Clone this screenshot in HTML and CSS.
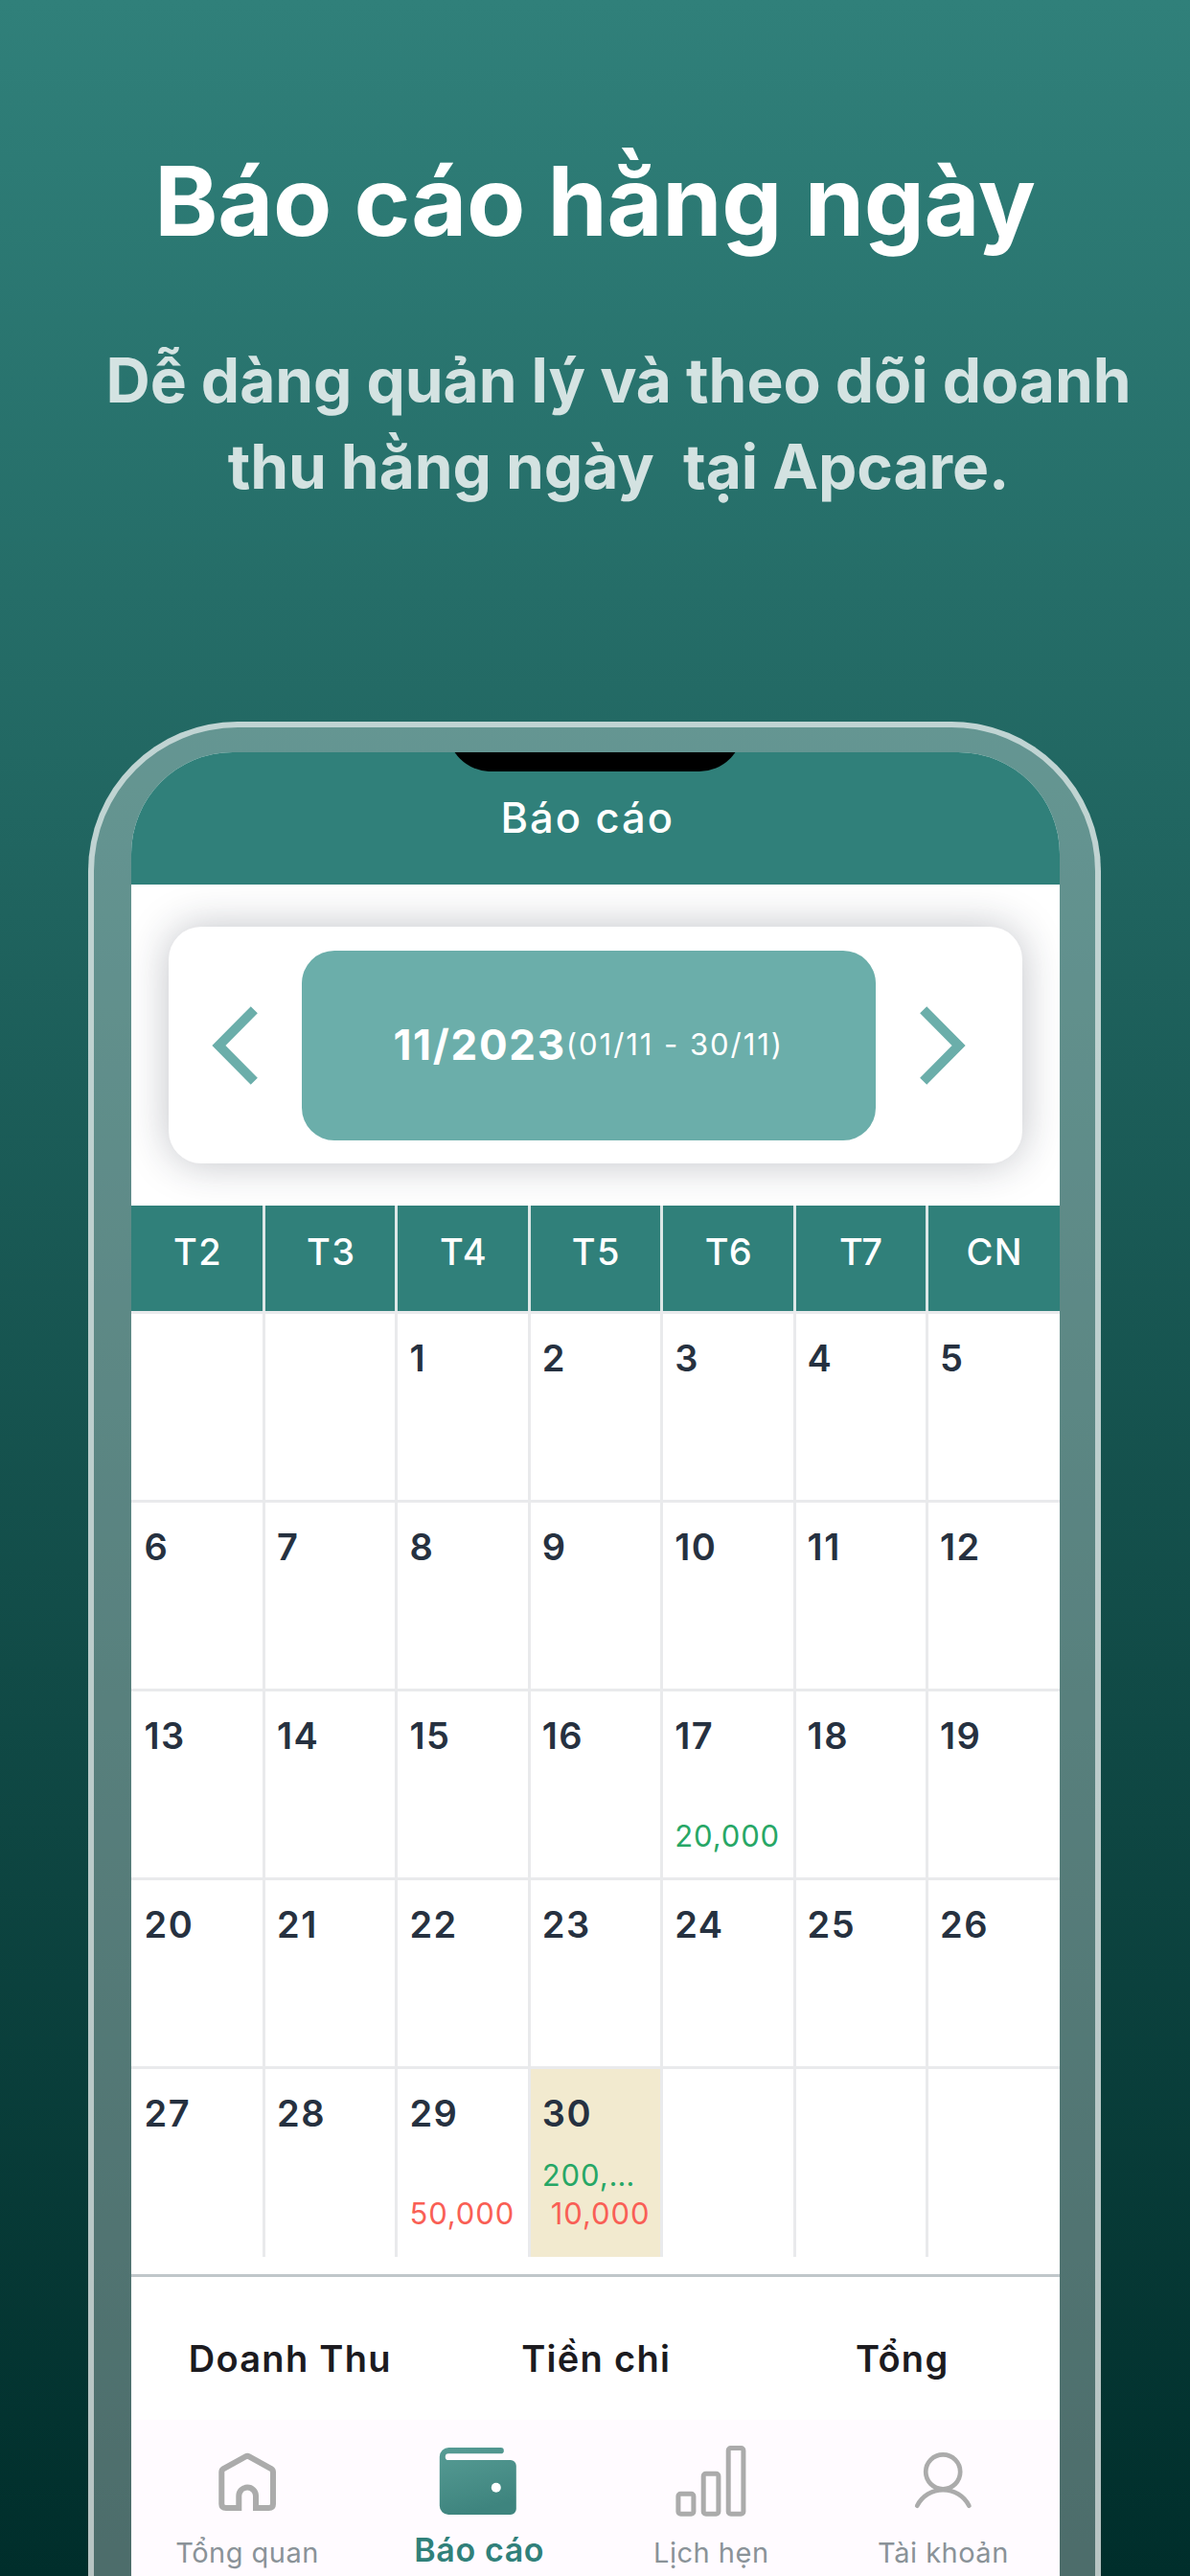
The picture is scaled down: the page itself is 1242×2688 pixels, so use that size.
FILE: index.html
```html
<!DOCTYPE html>
<html lang="vi">
<head>
<meta charset="utf-8">
<title>Báo cáo hằng ngày</title>
<link rel="stylesheet" href="styles.css">
</head>
<body>
<main class="page">
  <h1 class="headline">Báo cáo hằng ngày</h1>
  <p class="tagline">Dễ dàng quản lý và theo dõi doanh
thu hằng ngày&nbsp; tại Apcare.</p>

  <div class="phone">
    <div class="screen">
      <div class="notch"></div>
      <header class="appbar">Báo cáo</header>

      <section class="picker-area">
        <div class="picker">
          <svg class="chevron" viewBox="0 0 50 84"><path d="M45.3 4.8 8.4 42l36.9 37.2"/></svg>
          <div class="period"><b>11/2023</b><span>(01/11 - 30/11)</span></div>
          <svg class="chevron" viewBox="0 0 50 84"><path d="M4.7 4.8 41.6 42 4.7 79.2"/></svg>
        </div>
      </section>

      <section class="calendar">
        <div class="week head"><div>T2</div><div>T3</div><div>T4</div><div>T5</div><div>T6</div><div>T7</div><div>CN</div></div>
        <div class="week"><div></div><div></div><div>1</div><div>2</div><div>3</div><div>4</div><div>5</div></div>
        <div class="week"><div>6</div><div>7</div><div>8</div><div>9</div><div>10</div><div>11</div><div>12</div></div>
        <div class="week"><div>13</div><div>14</div><div>15</div><div>16</div><div>17<p class="sums"><span class="income">20,000</span></p></div><div>18</div><div>19</div></div>
        <div class="week"><div>20</div><div>21</div><div>22</div><div>23</div><div>24</div><div>25</div><div>26</div></div>
        <div class="week"><div>27</div><div>28</div><div>29<p class="sums"><span class="expense">50,000</span></p></div><div class="today">30<p class="sums"><span class="income">200,…</span><span class="expense indent">10,000</span></p></div><div></div><div></div><div></div></div>
      </section>

      <section class="summary"><div>Doanh Thu</div><div>Tiền chi</div><div>Tổng</div></section>

      <nav class="tabs">
        <div class="tab">
          <svg class="icon" viewBox="0 0 80 80"><path stroke-width="6" d="M31.3 55.3V68H18Q13.3 68 13.3 64V30.500Q13.300 28.300 15.300 27L38.800 14.100Q40.200 13.300 41.600 14.100L65 27Q67 28.300 67 30.500V64Q67 68 62.500 68H49V55.300A8.850 8.850 0 0 0 31.300 55.300Z"/></svg>
          <span>Tổng quan</span>
        </div>
        <div class="tab active">
          <svg class="icon wide" viewBox="-1 0 82 80">
            <defs><linearGradient id="wallet" x1="0" y1="0" x2="0.3" y2="1"><stop offset="0" stop-color="#579c95"/><stop offset="1" stop-color="#3e847e"/></linearGradient></defs>
            <path fill="url(#wallet)" stroke="none" d="M8.500 5H62.700a3.150 3.150 0 0 1 0 6.300H8.100a3.350 3.350 0 0 0 0 6.700H72.800a6 6 0 0 1 6 6V69a6 6 0 0 1-6 6H8a9.200 9.200 0 0 1-9.200-9.200V14.500A9.500 9.500 0 0 1 8.500 5Z"/>
            <circle fill="#fff" stroke="none" cx="57.800" cy="46.700" r="5"/>
          </svg>
          <span>Báo cáo</span>
        </div>
        <div class="tab">
          <svg class="icon" viewBox="0 0 80 80"><g stroke-width="5"><rect x="5.900" y="53.200" width="16" height="21" rx="2.500"/><rect x="32.200" y="32.200" width="15.700" height="42" rx="2.500"/><rect x="58.200" y="5.500" width="15.700" height="68.700" rx="2.500"/></g></svg>
          <span>Lịch hẹn</span>
        </div>
        <div class="tab">
          <svg class="icon" viewBox="0 0 80 80"><g stroke-width="4.700" stroke-linecap="round"><circle cx="40.200" cy="30.300" r="18"/><path d="M13.200 65.700A30.400 30.400 0 0 1 67.400 65.700"/></g></svg>
          <span>Tài khoản</span>
        </div>
      </nav>
    </div>
  </div>
</main>
</body>
</html>
```
FILE: styles.css
```css
* { box-sizing: border-box; }

body {
  margin: 0;
  font-family: Inter, "Noto Sans", sans-serif;
  color: #1c1b1f;
}

.page {
  width: 1242px;
  height: 2688px;
  padding-top: 150px;
  overflow: hidden;
  background: linear-gradient(#30807a, #002e2b);
}

.headline {
  margin: 0;
  font-size: 100px;
  font-weight: 700;
  line-height: 120px;
  letter-spacing: -0.250px;
  text-align: center;
  color: #fff;
}

.tagline {
  margin: 82px 0 0;
  padding-left: 49px;
  font-size: 64px;
  font-weight: 700;
  line-height: 90px;
  letter-spacing: -0.050px;
  text-align: center;
  white-space: pre;
  color: rgba(255, 255, 255, 0.8);
}

.phone {
  width: 1057px;
  height: 2100px;
  margin: 221px 0 0 92px;
  padding: 26px 37.500px 0 39px;
  border: 6px solid rgba(255, 255, 255, 0.6);
  border-radius: 156px;
  background: rgba(255, 255, 255, 0.3);
}

.screen {
  position: relative;
  height: 2060px;
  border-radius: 106px 106px 0 0;
  background: #fff;
  overflow: hidden;
}

.notch {
  position: absolute;
  top: -70px;
  left: 330px;
  width: 308px;
  height: 90px;
  border-radius: 45px;
  background: #000;
}

.appbar {
  height: 138px;
  padding-right: 16px;
  background: #30807a;
  color: #fff;
  font-size: 43.500px;
  font-weight: 500;
  line-height: 137px;
  letter-spacing: 2px;
  text-align: center;
}

.picker-area {
  height: 335px;
  padding: 44px 39px;
  overflow: hidden;
}

.picker {
  display: flex;
  align-items: center;
  justify-content: space-between;
  height: 247px;
  padding: 0 58px 0 44px;
  border-radius: 34px;
  background: #fff;
  box-shadow: 0 0 44px rgba(30, 35, 55, 0.28);
}

.chevron {
  width: 50px;
  height: 84px;
  fill: none;
  stroke: #6baeaa;
  stroke-width: 10;
}

.period {
  display: flex;
  align-items: center;
  justify-content: center;
  width: 599px;
  height: 198px;
  padding-bottom: 2px;
  border-radius: 34px;
  background: #6baeaa;
  color: #fff;
}

.period b {
  font-size: 44px;
  font-weight: 700;
  letter-spacing: 1.700px;
}

.period span {
  font-size: 31px;
  letter-spacing: 1.950px;
}

.week {
  display: grid;
  grid-template-columns: 140px repeat(5, 138.400px) 1fr;
  height: 197px;
  border-bottom: 3px solid #e9eaec;
  color: #263140;
  font-size: 38px;
  font-weight: 600;
  line-height: 56px;
  letter-spacing: 1.500px;
}

.week > div {
  display: flex;
  flex-direction: column;
  padding: 18px 0 24px 12px;
  border-right: 3px solid #e9eaec;
}

.week > div:first-child { padding-left: 13.500px; }

.week > div:last-child { border-right: 0; }

.week:last-child {
  height: 196px;
  border-bottom: 0;
}

.week:last-child > div { padding-bottom: 26px; }

.week.head {
  height: 113px;
  background: #30807a;
  color: #fff;
  font-weight: 500;
  line-height: 96px;
  text-align: center;
}

.week.head > div {
  padding: 0 0 0 2px;
  border-color: #dde7e7;
}

.week .today { background: #f2eacf; }

.sums {
  display: flex;
  flex-direction: column;
  margin: auto 0 0;
  font-size: 31px;
  font-weight: 400;
  line-height: 39.500px;
  letter-spacing: 0.900px;
}

.income { color: #27a766; }
.expense { color: #f95f55; }
.indent { padding-left: 9px; }

.summary {
  display: grid;
  grid-template-columns: repeat(3, 1fr);
  height: 152px;
  margin-top: 18px;
  padding: 57px 4px 0 6px;
  border-top: 3px solid #c0c7ca;
  font-size: 38px;
  font-weight: 600;
  line-height: 56px;
  letter-spacing: 1.300px;
  text-align: center;
}

.tabs {
  display: grid;
  grid-template-columns: repeat(4, 1fr);
  height: 200px;
  padding-top: 24px;
  background: #fffbff;
}

.tab {
  display: flex;
  flex-direction: column;
  align-items: center;
  color: #8a9298;
  font-size: 29px;
  line-height: 69px;
  letter-spacing: 0.500px;
}

.tab.active {
  color: #30807a;
  font-size: 34px;
  font-weight: 600;
  line-height: 64px;
  letter-spacing: 0.600px;
}

.icon {
  width: 80px;
  height: 80px;
  fill: none;
  stroke: #ababab;
  overflow: visible;
}

.icon.wide { width: 82px; }
```
